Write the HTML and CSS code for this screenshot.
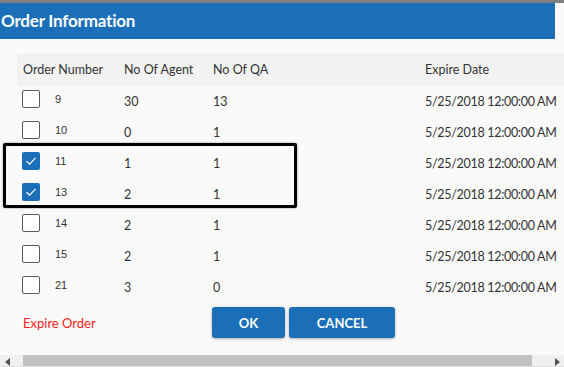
FILE: index.html
```html
<!DOCTYPE html>
<html>
    <head>
        <title>Order Information</title>
        <link rel="stylesheet" href="styles.css">
    </head>

    <body>
        <div class="TOP_STRIP"></div>

        <!--Dialog title bar-->
        <div class="DIALOG_TITLE">Order Information</div>

        <div class="DIALOG_BODY">
            <!--Order table-->
            <div class="ORDER_TABLE">
                <div class="ORDER_ROW ORDER_HEAD">
                    <div>Order Number</div>
                    <div>No Of Agent</div>
                    <div>No Of QA</div>
                    <div></div>
                    <div>Expire Date</div>
                </div>

                <div class="ORDER_ROW">
                    <div class="ORDER_CELL"><span class="CHECK_BOX"></span><span class="ORDER_NO">9</span></div>
                    <div>30</div>
                    <div>13</div>
                    <div></div>
                    <div class="DATE">5/25/2018 12:00:00 AM</div>
                </div>
                <div class="ORDER_ROW">
                    <div class="ORDER_CELL"><span class="CHECK_BOX"></span><span class="ORDER_NO">10</span></div>
                    <div>0</div>
                    <div>1</div>
                    <div></div>
                    <div class="DATE">5/25/2018 12:00:00 AM</div>
                </div>
                <div class="ORDER_ROW">
                    <div class="ORDER_CELL"><span class="CHECK_BOX CHECKED"><svg viewBox="0 0 18 18" width="18" height="18"><path d="M4.5 9.2 L7.6 12.2 L13.6 5.8" fill="none" stroke="#fff" stroke-width="1.2"/></svg></span><span class="ORDER_NO">11</span></div>
                    <div>1</div>
                    <div>1</div>
                    <div></div>
                    <div class="DATE">5/25/2018 12:00:00 AM</div>
                </div>
                <div class="ORDER_ROW">
                    <div class="ORDER_CELL"><span class="CHECK_BOX CHECKED"><svg viewBox="0 0 18 18" width="18" height="18"><path d="M4.5 9.2 L7.6 12.2 L13.6 5.8" fill="none" stroke="#fff" stroke-width="1.2"/></svg></span><span class="ORDER_NO">13</span></div>
                    <div>2</div>
                    <div>1</div>
                    <div></div>
                    <div class="DATE">5/25/2018 12:00:00 AM</div>
                </div>
                <div class="ORDER_ROW">
                    <div class="ORDER_CELL"><span class="CHECK_BOX"></span><span class="ORDER_NO">14</span></div>
                    <div>2</div>
                    <div>1</div>
                    <div></div>
                    <div class="DATE">5/25/2018 12:00:00 AM</div>
                </div>
                <div class="ORDER_ROW">
                    <div class="ORDER_CELL"><span class="CHECK_BOX"></span><span class="ORDER_NO">15</span></div>
                    <div>2</div>
                    <div>1</div>
                    <div></div>
                    <div class="DATE">5/25/2018 12:00:00 AM</div>
                </div>
                <div class="ORDER_ROW">
                    <div class="ORDER_CELL"><span class="CHECK_BOX"></span><span class="ORDER_NO">21</span></div>
                    <div>3</div>
                    <div>0</div>
                    <div></div>
                    <div class="DATE">5/25/2018 12:00:00 AM</div>
                </div>

                <!--Highlight box drawn over the selected rows-->
                <div class="HIGHLIGHT_BOX"></div>
            </div>

            <!--Footer with link and buttons-->
            <div class="DIALOG_FOOTER">
                <div class="EXPIRE_LINK">Expire Order</div>
                <div class="DIALOG_BUTTONS">
                    <button class="BTN BTN_OK">OK</button>
                    <button class="BTN BTN_CANCEL">CANCEL</button>
                </div>
            </div>
        </div>

        <!--Horizontal scrollbar-->
        <div class="H_SCROLL">
            <div class="SCROLL_ARROW"><svg width="6" height="8" viewBox="0 0 6 8"><path d="M5 0 L5 8 L0 4 Z" fill="#505050"/></svg></div>
            <div class="SCROLL_TRACK"><div class="SCROLL_THUMB"></div></div>
            <div class="SCROLL_ARROW"><svg width="6" height="8" viewBox="0 0 6 8"><path d="M1 0 L1 8 L6 4 Z" fill="#505050"/></svg></div>
        </div>
        <div class="BOTTOM_LINE"></div>
    </body>
</html>
```

FILE: styles.css
```css
/*Dialog blue: #1A6FB8*/
body {
    margin: 0;
    width: 564px;
    height: 367px;
    overflow: hidden;
    background-color: #FAFAFA;
    font-family: Lato, "Liberation Sans", sans-serif;
    font-size: 12.5px;
    color: #333;
}
.TOP_STRIP {
    height: 3px;
    background-color: #808080;
}
.DIALOG_TITLE {
    width: 555px;
    height: 36px;
    padding-left: 1px;
    box-sizing: border-box;
    background-color: #1A6FB8;
    color: white;
    font-size: 17px;
    font-weight: bold;
    line-height: 35px;
    letter-spacing: -0.2px;
}
.DIALOG_BODY {
    height: 311px;
    padding-top: 14px;
    box-sizing: border-box;
}
/*Order table*/
.ORDER_TABLE {
    position: relative;
    margin-left: 17px;
}
.ORDER_ROW {
    display: grid;
    grid-template-columns: 101px 89px 212px 0px auto;
    align-items: center;
    height: 31px;
    padding-left: 6px;
    white-space: nowrap;
}
.ORDER_HEAD {
    height: 33px;
    background-color: #F2F2F2;
    color: #333;
}
.DATE {
    letter-spacing: -0.3px;
}
.ORDER_CELL {
    display: flex;
    align-items: center;
    padding-bottom: 5px;
}
.CHECK_BOX {
    display: block;
    width: 18px;
    height: 18px;
    margin-left: -1px;
    box-sizing: border-box;
    border: 1px solid #5A5A5A;
    border-radius: 2px;
    background-color: white;
}
.CHECK_BOX svg {
    display: block;
}
.CHECKED {
    border: none;
    background-color: #1A6FB8;
}
.ORDER_NO {
    margin-left: 15px;
    font-family: "Liberation Sans", Arial, sans-serif;
    font-size: 11px;
    color: #333;
}
.HIGHLIGHT_BOX {
    position: absolute;
    left: -14px;
    top: 90px;
    width: 294px;
    height: 65px;
    box-sizing: border-box;
    border: 3px solid #000;
    border-radius: 2px;
    box-shadow: 0 0 2px rgba(0, 0, 0, 0.5);
}
/*Footer*/
.DIALOG_FOOTER {
    display: flex;
    align-items: center;
    margin-top: 4px;
    height: 31px;
}
.EXPIRE_LINK {
    width: 189px;
    padding-left: 23px;
    color: #FF2020;
    font-size: 13px;
}
.DIALOG_BUTTONS {
    display: flex;
    gap: 4px;
}
.BTN {
    height: 31px;
    border: none;
    border-radius: 3px;
    background-color: #1A6FB8;
    color: white;
    font-family: Lato, "Liberation Sans", sans-serif;
    font-size: 13px;
    font-weight: bold;
    box-shadow: 0 1px 3px rgba(0, 0, 0, 0.3);
}
.BTN_OK {
    width: 73px;
}
.BTN_CANCEL {
    width: 106px;
}
/*Scrollbar*/
.H_SCROLL {
    display: flex;
    height: 11px;
    margin-top: 5px;
    background-color: #F0F0F0;
}
.SCROLL_ARROW {
    display: flex;
    align-items: center;
    justify-content: center;
    width: 15px;
    padding-top: 2px;
}
.SCROLL_TRACK {
    flex: 1;
    padding-left: 8px;
    padding-right: 17px;
}
.SCROLL_THUMB {
    height: 100%;
    background-color: #C1C1C1;
}
.BOTTOM_LINE {
    height: 3px;
    background-color: #E3DFD6;
}
```
